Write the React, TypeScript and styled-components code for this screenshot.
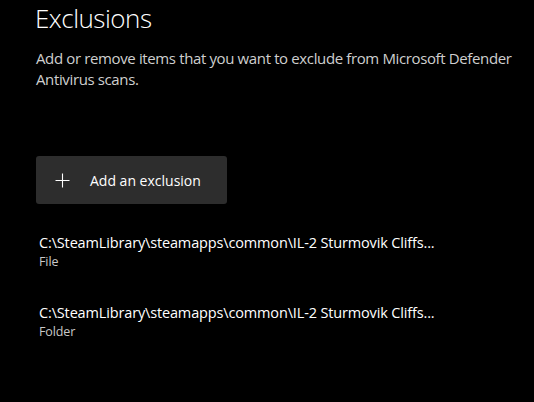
import styled, { createGlobalStyle } from "styled-components";

const GlobalStyle = createGlobalStyle`
  html, body {
    margin: 0;
    padding: 0;
    background: #000;
  }
  body {
    font-family: "Open Sans", "Noto Sans", sans-serif;
    color: #fff;
  }
`;

const Page = styled.div`
  width: 534px;
  height: 402px;
  overflow: hidden;
  background: #000;
  padding: 0 0 0 35px;
  box-sizing: border-box;
  display: flex;
  flex-direction: column;
`;

const Title = styled.h1`
  margin: 0;
  font-size: 26px;
  font-weight: 300;
  line-height: 36px;
  letter-spacing: -0.5px;
  color: #fff;
`;

const Description = styled.p`
  margin: 12px 0 0 1px;
  font-size: 15px;
  line-height: 21px;
  color: #cfcfcf;
  letter-spacing: -0.37px;
  width: 490px;
`;

const AddButton = styled.button`
  margin: 66px 0 0 1px;
  width: 191px;
  height: 48px;
  display: flex;
  align-items: center;
  gap: 20px;
  padding: 0 0 0 19px;
  background: #2d2d2d;
  border: none;
  border-radius: 3px;
  color: #fff;
  font-family: inherit;
  font-size: 14px;
  letter-spacing: 0;
  cursor: pointer;
`;

const PlusIcon = styled.svg`
  width: 15px;
  height: 15px;
  flex: none;
`;

const List = styled.div`
  display: flex;
  flex-direction: column;
  gap: 33px;
  margin-top: 29px;
  padding-left: 4px;
`;

const Item = styled.div`
  display: flex;
  flex-direction: column;
`;

const Path = styled.div`
  font-size: 14.5px;
  line-height: 20px;
  color: #fff;
  letter-spacing: -0.15px;
`;

const Kind = styled.div`
  font-size: 12.5px;
  line-height: 17px;
  color: #c8c8c8;
  letter-spacing: -0.1px;
`;

const items = [
  { path: "C:\\SteamLibrary\\steamapps\\common\\IL-2 Sturmovik Cliffs...", kind: "File" },
  { path: "C:\\SteamLibrary\\steamapps\\common\\IL-2 Sturmovik Cliffs...", kind: "Folder" },
];

export default function App() {
  return (
    <>
      <GlobalStyle />
      <Page>
        <Title>Exclusions</Title>
        <Description>
          Add or remove items that you want to exclude from Microsoft Defender
          Antivirus scans.
        </Description>
        <AddButton>
          <PlusIcon viewBox="0 0 15 15">
            <path d="M7.5 0.5v14M0.5 7.5h14" stroke="#fff" strokeWidth="1.1" fill="none" />
          </PlusIcon>
          Add an exclusion
        </AddButton>
        <List>
          {items.map((it, i) => (
            <Item key={i}>
              <Path>{it.path}</Path>
              <Kind>{it.kind}</Kind>
            </Item>
          ))}
        </List>
      </Page>
    </>
  );
}
